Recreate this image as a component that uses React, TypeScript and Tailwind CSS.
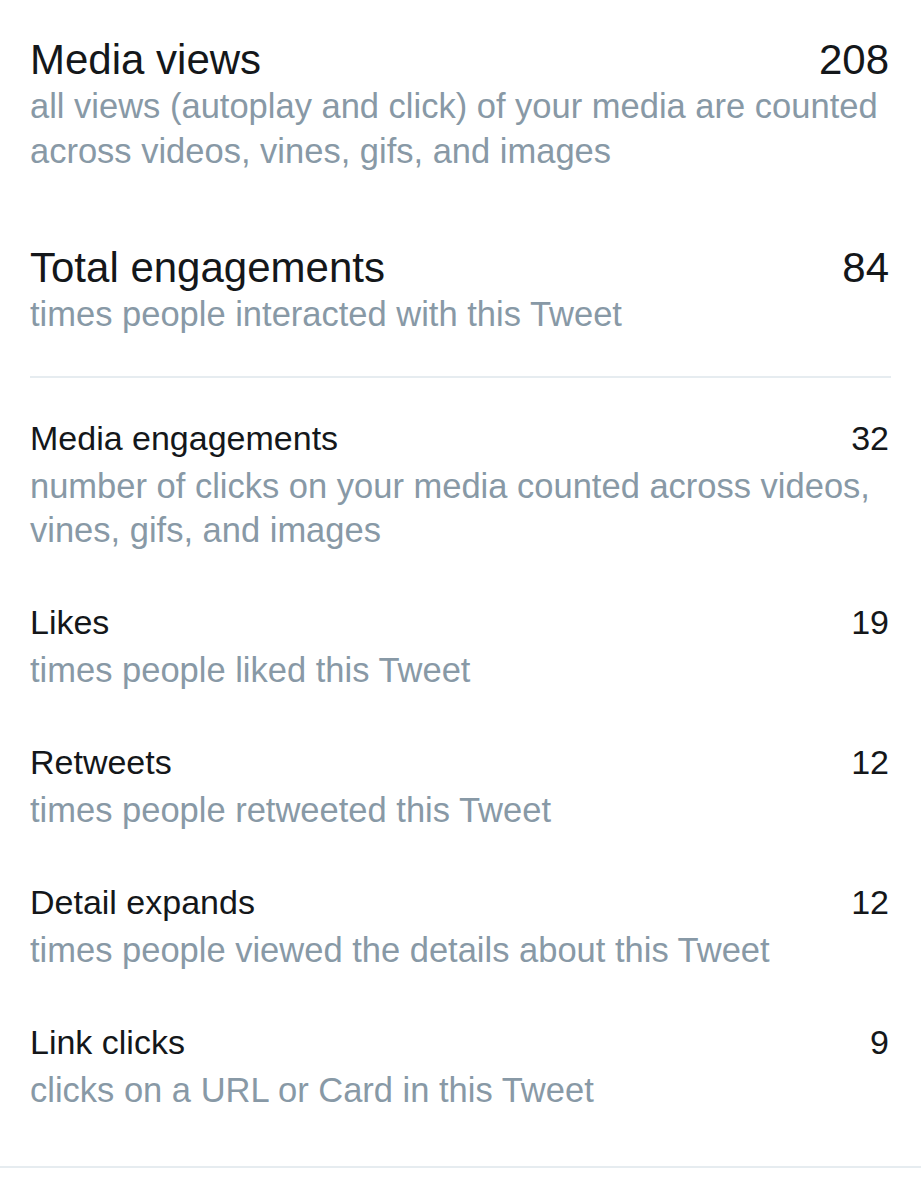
import React from "react";

type Stat = { label: string; value: string; hint: string };

const main: Stat[] = [
  {
    label: "Media views",
    value: "208",
    hint: "all views (autoplay and click) of your media are counted across videos, vines, gifs, and images",
  },
  {
    label: "Total engagements",
    value: "84",
    hint: "times people interacted with this Tweet",
  },
];

const details: Stat[] = [
  {
    label: "Media engagements",
    value: "32",
    hint: "number of clicks on your media counted across videos, vines, gifs, and images",
  },
  { label: "Likes", value: "19", hint: "times people liked this Tweet" },
  { label: "Retweets", value: "12", hint: "times people retweeted this Tweet" },
  {
    label: "Detail expands",
    value: "12",
    hint: "times people viewed the details about this Tweet",
  },
  { label: "Link clicks", value: "9", hint: "clicks on a URL or Card in this Tweet" },
];

const App: React.FC = () => {
  return (
    <div
      className="min-h-[1200px] w-full bg-white"
      style={{ fontFamily: '"Liberation Sans", Arial, sans-serif' }}
    >
      {/* Headline stats */}
      <div className="pl-[30px] pr-[32px] pt-[38px] flex flex-col gap-[72px]">
        {main.map((s) => (
          <div key={s.label}>
            <div className="flex justify-between items-baseline text-[42px] leading-[44px] text-[#14171a]">
              <span>{s.label}</span>
              <span>{s.value}</span>
            </div>
            <p className="mt-[2px] text-[34.5px] leading-[45px] text-[#8899a6]">{s.hint}</p>
          </div>
        ))}
      </div>

      <div className="mx-[30px] mt-[39px] h-[2px] bg-[#e6ecf0]" />

      {/* Breakdown */}
      <div className="pl-[30px] pr-[32px] pt-[40px] flex flex-col gap-[50px]">
        {details.map((s) => (
          <div key={s.label}>
            <div className="flex justify-between items-baseline text-[34px] leading-[40px] text-[#14171a]">
              <span>{s.label}</span>
              <span>{s.value}</span>
            </div>
            <p className="mt-[6px] text-[34.5px] leading-[44px] text-[#8899a6]">{s.hint}</p>
          </div>
        ))}
      </div>

      <div className="mt-[54px] h-[2px] bg-[#e6ecf0]" />
    </div>
  );
};

export default App;
